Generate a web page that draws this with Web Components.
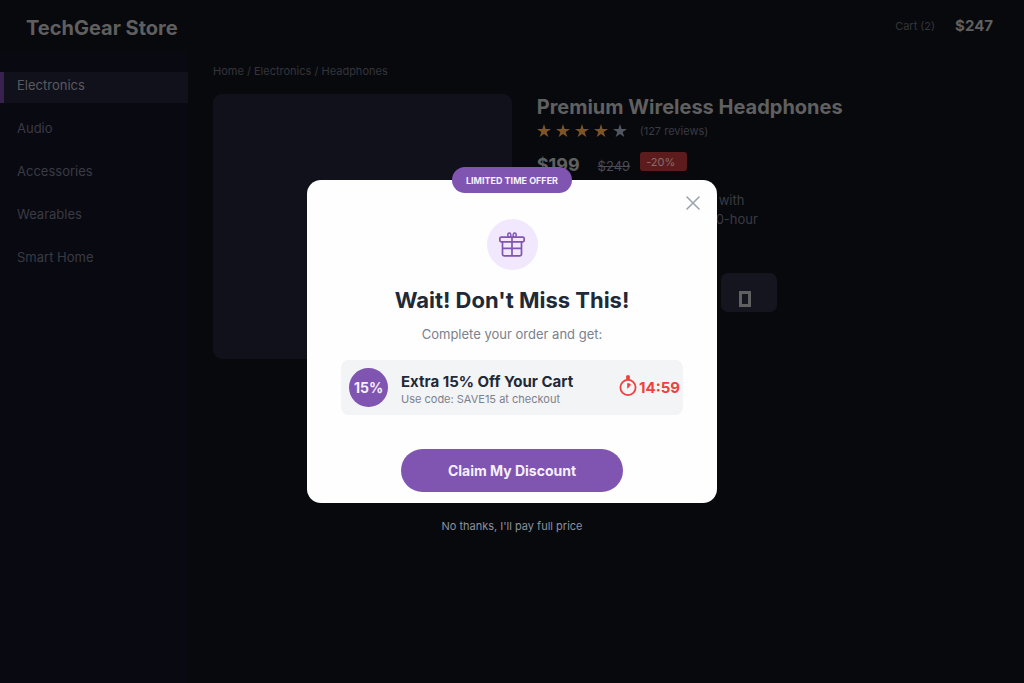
<!DOCTYPE html>
<html lang="en">
<head>
<meta charset="utf-8">
<meta name="viewport" content="width=device-width, initial-scale=1">
<title>TechGear Store</title>
<style>
  html, body { margin: 0; height: 100%; }
  body { background: #08090d; color: #606060; font: 13px/20px Inter, "Liberation Sans", sans-serif; }
</style>
</head>
<body>
<store-page></store-page>

<script>
const define = (name, html) => {
  const template = document.createElement('template');
  template.innerHTML = html;
  customElements.define(name, class extends HTMLElement {
    constructor() {
      super();
      this.attachShadow({ mode: 'open' }).append(template.content.cloneNode(true));
    }
  });
};

define('store-header', `
  <style>
    :host { display: flex; align-items: center; justify-content: space-between; height: 51px; padding: 0 31px 0 26px; box-sizing: border-box; }
    h1 { margin: 0; padding-top: 5px; font-size: 20px; line-height: 24px; font-weight: 700; color: #5f5f5f; }
    .cart { display: flex; align-items: center; gap: 20px; padding-top: 1px; }
    a { font-size: 11px; color: #34353a; text-decoration: none; }
    strong { font-size: 15px; color: #606060; }
  </style>
  <h1>TechGear Store</h1>
  <div class="cart"><a href="#cart">Cart (2)</a><strong>$247</strong></div>
`);

define('store-link', `
  <style>
    :host { display: block; border-left: 4px solid transparent; color: #3a3b42; }
    :host([active]) { background: #11111c; border-color: #38214f; color: #5a5a5e; }
    a { display: block; padding: 3px 13px 8px; line-height: 20px; color: inherit; text-decoration: none; }
  </style>
  <a href="#category"><slot></slot></a>
`);

define('store-sidebar', `
  <style>
    :host { display: block; background: #090912; }
    nav { display: flex; flex-direction: column; gap: 12px; padding-top: 21px; }
  </style>
  <nav aria-label="Categories"><slot></slot></nav>
`);

define('star-rating', `
  <style>
    :host { display: flex; align-items: center; gap: 5px; font-size: 11px; line-height: 22px; color: #3a3b42; }
    svg { width: 14px; height: 14px; fill: #7d5425; }
    svg:last-of-type { fill: #515663; }
    span { margin-left: 8px; }
  </style>
  ${'<svg viewBox="0 0 14 14" aria-hidden="true"><path d="M7 0l1.600 5H14L9.700 8.100 11.300 13 7 10 2.700 13 4.300 8.100 0 5h5.400z"/></svg>'.repeat(5)}
  <span><slot></slot></span>
`);

define('product-info', `
  <style>
    :host { display: block; min-width: 0; }
    h2 { margin: 0; font-size: 20px; line-height: 26px; font-weight: 700; color: #606060; white-space: nowrap; }
    .price { display: flex; align-items: center; margin-top: 8px; height: 30px; }
    strong { font-size: 18px; color: #606060; }
    del { margin-left: 18px; padding-top: 2px; color: #484b55; }
    .off { box-sizing: border-box; width: 47px; height: 19px; margin: 0 0 8px 10px; padding-left: 6px; border-radius: 3px; background: #5c1c1e; color: #896b6c; font-size: 11px; line-height: 20px; }
    p { margin: 11px 0 0 179px; line-height: 19px; color: #3a3b42; }
    p span { display: block; text-indent: 3px; }
    .actions { display: flex; margin: 44px 0 0 184px; }
    button { width: 56px; height: 39px; padding: 12px 0 0; border: 0; border-radius: 7px; background: #15151f; }
    svg { display: block; margin: 0 18px; }
  </style>
  <h2>Premium Wireless Headphones</h2>
  <star-rating>(127 reviews)</star-rating>
  <div class="price"><strong>$199</strong><del>$249</del><span class="off">-20%</span></div>
  <p><span>with</span>0-hour</p>
  <div class="actions"><button type="button" aria-label="Save"><svg width="12" height="16" viewBox="0 0 12 16" fill="none" stroke="#606060" stroke-width="3"><path d="M1.500 1.500h9v13h-9z"/></svg></button></div>
`);

define('product-view', `
  <style>
    :host { display: block; padding: 10px 25px; }
    nav { font-size: 11px; line-height: 20px; color: #34353c; }
    a { color: inherit; text-decoration: none; }
    .product { display: grid; grid-template-columns: minmax(200px, 38%) 1fr; gap: 25px; margin-top: 13px; }
    .photo { height: 265px; border-radius: 9px; background: #11111c; }
  </style>
  <nav aria-label="Breadcrumb"><a href="#home">Home</a> / <a href="#electronics">Electronics</a> / <a href="#headphones">Headphones</a></nav>
  <div class="product"><div class="photo"></div><product-info></product-info></div>
`);

define('offer-row', `
  <style>
    :host { display: flex; align-items: center; height: 55px; padding: 0 3px 0 8px; border-radius: 8px; background: #f3f4f6; text-align: left; }
    .pct { width: 39px; height: 39px; border-radius: 50%; background: #8054b1; color: #f6f0fc; font-size: 14px; line-height: 39px; font-weight: 700; text-align: center; }
    .text { flex: 1; margin-left: 13px; padding-top: 5px; white-space: nowrap; }
    h3 { margin: 0; font-size: 15px; line-height: 18px; font-weight: 700; color: #1f2937; }
    p { margin: 0; font-size: 11px; line-height: 16px; color: #7b818d; }
    .timer { display: flex; align-items: center; gap: 2px; color: #ef4040; font-size: 15px; font-weight: 700; }
    svg { margin-bottom: 5px; }
  </style>
  <div class="pct">15%</div>
  <div class="text"><h3>Extra 15% Off Your Cart</h3><p>Use code: SAVE15 at checkout</p></div>
  <div class="timer">
    <svg width="18" height="21" viewBox="0 0 18 21" fill="none" stroke="currentColor" stroke-width="1.800" aria-hidden="true"><circle cx="9" cy="12.500" r="7.600"/><path d="M7.700.800h2.600v3.700H7.700z" fill="currentColor" stroke-width="1"/><path d="M8.600 8.500v4.700l3-3.400q-1-1.300-3-1.300z" fill="currentColor" stroke-width=".8"/></svg>
    <span>14:59</span>
  </div>
`);

define('offer-dialog', `
  <style>
    :host { display: block; position: relative; box-sizing: border-box; width: 40%; min-width: 410px; padding: 39px 34px 11px; border-radius: 14px; background: #fefefe; text-align: center; }
    .tag { position: absolute; top: -13px; left: 50%; transform: translateX(-50%); box-sizing: border-box; width: 120px; height: 26px; padding-top: 1px; border-radius: 13px; background: #8054b1; color: #f6f0fc; font-size: 9px; line-height: 26px; font-weight: 700; white-space: nowrap; }
    .close { position: absolute; top: 13px; right: 14px; padding: 3px; border: 0; background: none; }
    svg { display: block; }
    .gift { display: grid; place-items: center; width: 51px; height: 51px; margin: 0 auto; border-radius: 50%; background: #f1e8fd; }
    h2 { margin: 14px 0 0; font-size: 22px; line-height: 32px; font-weight: 700; color: #1f2937; }
    p { margin: 8px 0 16px; line-height: 20px; color: #7b818d; }
    .claim { display: block; width: 222px; height: 43px; margin: 34px auto 0; padding: 0; border: 0; border-radius: 22px; background: #8054b1; color: #f6f0fc; font: 700 14px/42px Inter, "Liberation Sans", sans-serif; }
    .decline { position: absolute; top: 100%; left: 0; right: 0; margin-top: 13px; font-size: 11px; line-height: 20px; color: #8b919d; text-decoration: none; }
  </style>
  <span class="tag">LIMITED TIME OFFER</span>
  <button class="close" type="button" aria-label="Close"><svg width="14" height="14" viewBox="0 0 14 14" fill="none" stroke="#9ca3af" stroke-width="1.600" stroke-linecap="round"><path d="M1 1l12 12M13 1L1 13"/></svg></button>
  <div class="gift"><svg width="28" height="26" viewBox="0 0 28 26" fill="none" stroke="#8054b1" stroke-width="1.700" stroke-linejoin="round" aria-hidden="true"><rect x="1.800" y="5.200" width="24.400" height="4.600" rx="1.500"/><path d="M4.500 9.800v12.400q0 1.600 1.600 1.600h15.800q1.600 0 1.600-1.600V9.800M14 5.200v18.600M4.500 16.300h19"/><path d="M12.700 5.200h-2.400q-1.300-3.800.8-4.100 2.200-.3 1.600 4.100zM15.300 5.200h2.400q1.300-3.800-.8-4.100-2.200-.3-1.600 4.100z" stroke-width="1.500"/></svg></div>
  <h2>Wait! Don't Miss This!</h2>
  <p>Complete your order and get:</p>
  <offer-row></offer-row>
  <button class="claim" type="button">Claim My Discount</button>
  <a class="decline" href="#decline">No thanks, I'll pay full price</a>
`);

define('store-page', `
  <style>
    :host { display: flex; flex-direction: column; position: relative; min-height: 100%; background: #08090d; }
    main { flex: 1; display: grid; grid-template-columns: 188px 1fr; }
    .overlay { position: absolute; inset: 0; display: grid; place-items: center; }
  </style>
  <store-header></store-header>
  <main>
    <store-sidebar>
      <store-link active>Electronics</store-link>
      <store-link>Audio</store-link>
      <store-link>Accessories</store-link>
      <store-link>Wearables</store-link>
      <store-link>Smart Home</store-link>
    </store-sidebar>
    <product-view></product-view>
  </main>
  <div class="overlay"><offer-dialog role="dialog" aria-label="Limited time offer"></offer-dialog></div>
`);
</script>
</body>
</html>
